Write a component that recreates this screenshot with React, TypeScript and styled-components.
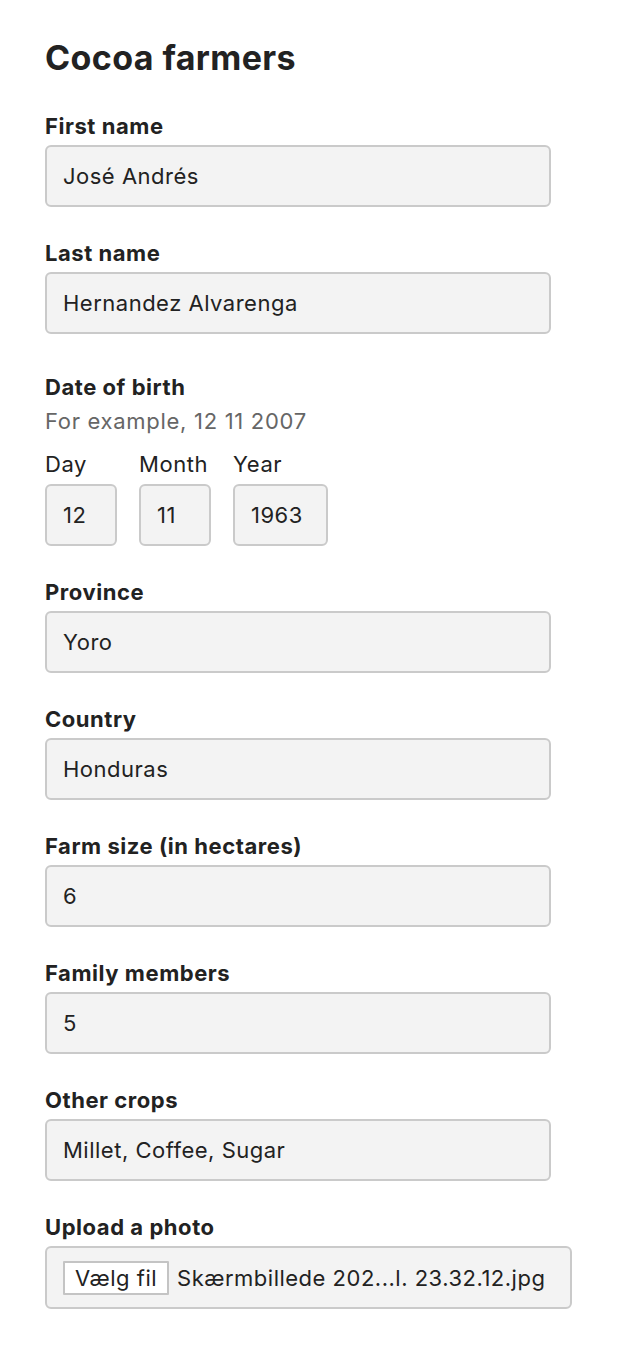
import React from 'react';
import styled, { createGlobalStyle } from 'styled-components';

const GlobalStyle = createGlobalStyle`
  body {
    margin: 0;
    background: #ffffff;
    font-family: Inter, "Noto Sans", "Liberation Sans", sans-serif;
    color: #222222;
    letter-spacing: 0.55px;
  }
`;

const Page = styled.main`
  padding: 38px 0 40px 45px;
  width: 528px;
`;

const Title = styled.h1`
  margin: 0 0 36px;
  font-size: 34px;
  line-height: 40px;
  font-weight: 700;
  letter-spacing: 0.4px;
  color: #222222;
`;

const Group = styled.div`
  margin-bottom: 34px;
`;

const Label = styled.label`
  display: block;
  margin-bottom: 6px;
  font-size: 22px;
  line-height: 25px;
  font-weight: 700;
  color: #222222;
`;

const TextInput = styled.input<{ $width?: number }>`
  display: block;
  box-sizing: border-box;
  width: ${(p) => (p.$width ? `${p.$width}px` : '506px')};
  height: 62px;
  margin: 0;
  padding: 0 16px;
  border: 2px solid #cacaca;
  border-radius: 6px;
  background: #f3f3f3;
  font-family: Inter, "Noto Sans", "Liberation Sans", sans-serif;
  font-size: 22px;
  letter-spacing: 0.5px;
  color: #222222;
  outline: none;
`;

const Fieldset = styled.fieldset`
  margin: 41px 0 34px;
  padding: 0;
  border: 0;
  min-width: 0;
`;

const Legend = styled.legend`
  padding: 0;
  margin-bottom: 9px;
  font-size: 22px;
  line-height: 25px;
  font-weight: 700;
  color: #222222;
`;

const Hint = styled.div`
  margin-bottom: 18px;
  font-size: 22px;
  line-height: 25px;
  letter-spacing: 0.7px;
  color: #666666;
`;

const DateRow = styled.div`
  display: flex;
  gap: 22px;
`;

const DateItem = styled.div`
  display: flex;
  flex-direction: column;
`;

const SubLabel = styled.label`
  margin-bottom: 7px;
  font-size: 22px;
  line-height: 25px;
  color: #222222;
`;

const FileBox = styled.div`
  box-sizing: border-box;
  display: flex;
  align-items: center;
  gap: 8px;
  width: 527px;
  height: 63px;
  padding: 0 16px;
  border: 2px solid #cacaca;
  border-radius: 6px;
  background: #f3f3f3;
`;

const FileButton = styled.button`
  box-sizing: border-box;
  height: 34px;
  padding: 0 10px;
  border: 2px solid #c4c4c4;
  border-radius: 1px;
  background: #ffffff;
  font-family: Inter, "Noto Sans", "Liberation Sans", sans-serif;
  font-size: 22px;
  letter-spacing: 0.5px;
  color: #222222;
`;

const FileName = styled.span`
  font-size: 22px;
  letter-spacing: 0.5px;
  color: #222222;
  white-space: nowrap;
`;

const fields = [
  { id: 'province', label: 'Province', value: 'Yoro' },
  { id: 'country', label: 'Country', value: 'Honduras' },
  { id: 'farm-size', label: 'Farm size (in hectares)', value: '6' },
  { id: 'family', label: 'Family members', value: '5' },
  { id: 'crops', label: 'Other crops', value: 'Millet, Coffee, Sugar' },
];

const Field: React.FC<{ id: string; label: string; value: string }> = ({ id, label, value }) => (
  <Group>
    <Label htmlFor={id}>{label}</Label>
    <TextInput id={id} defaultValue={value} />
  </Group>
);

export default function App() {
  return (
    <>
      <GlobalStyle />
      <Page>
        <Title>Cocoa farmers</Title>
        <Field id="first-name" label="First name" value="José Andrés" />
        <Field id="last-name" label="Last name" value="Hernandez Alvarenga" />

        <Fieldset>
          <Legend>Date of birth</Legend>
          <Hint>For example, 12 11 2007</Hint>
          <DateRow>
            <DateItem>
              <SubLabel htmlFor="dob-day">Day</SubLabel>
              <TextInput id="dob-day" $width={72} defaultValue="12" />
            </DateItem>
            <DateItem>
              <SubLabel htmlFor="dob-month">Month</SubLabel>
              <TextInput id="dob-month" $width={72} defaultValue="11" />
            </DateItem>
            <DateItem>
              <SubLabel htmlFor="dob-year">Year</SubLabel>
              <TextInput id="dob-year" $width={95} defaultValue="1963" />
            </DateItem>
          </DateRow>
        </Fieldset>

        {fields.map((f) => (
          <Field key={f.id} {...f} />
        ))}

        <Group>
          <Label>Upload a photo</Label>
          <FileBox>
            <FileButton type="button">Vælg fil</FileButton>
            <FileName>Skærmbillede 202...l. 23.32.12.jpg</FileName>
          </FileBox>
        </Group>
      </Page>
    </>
  );
}
